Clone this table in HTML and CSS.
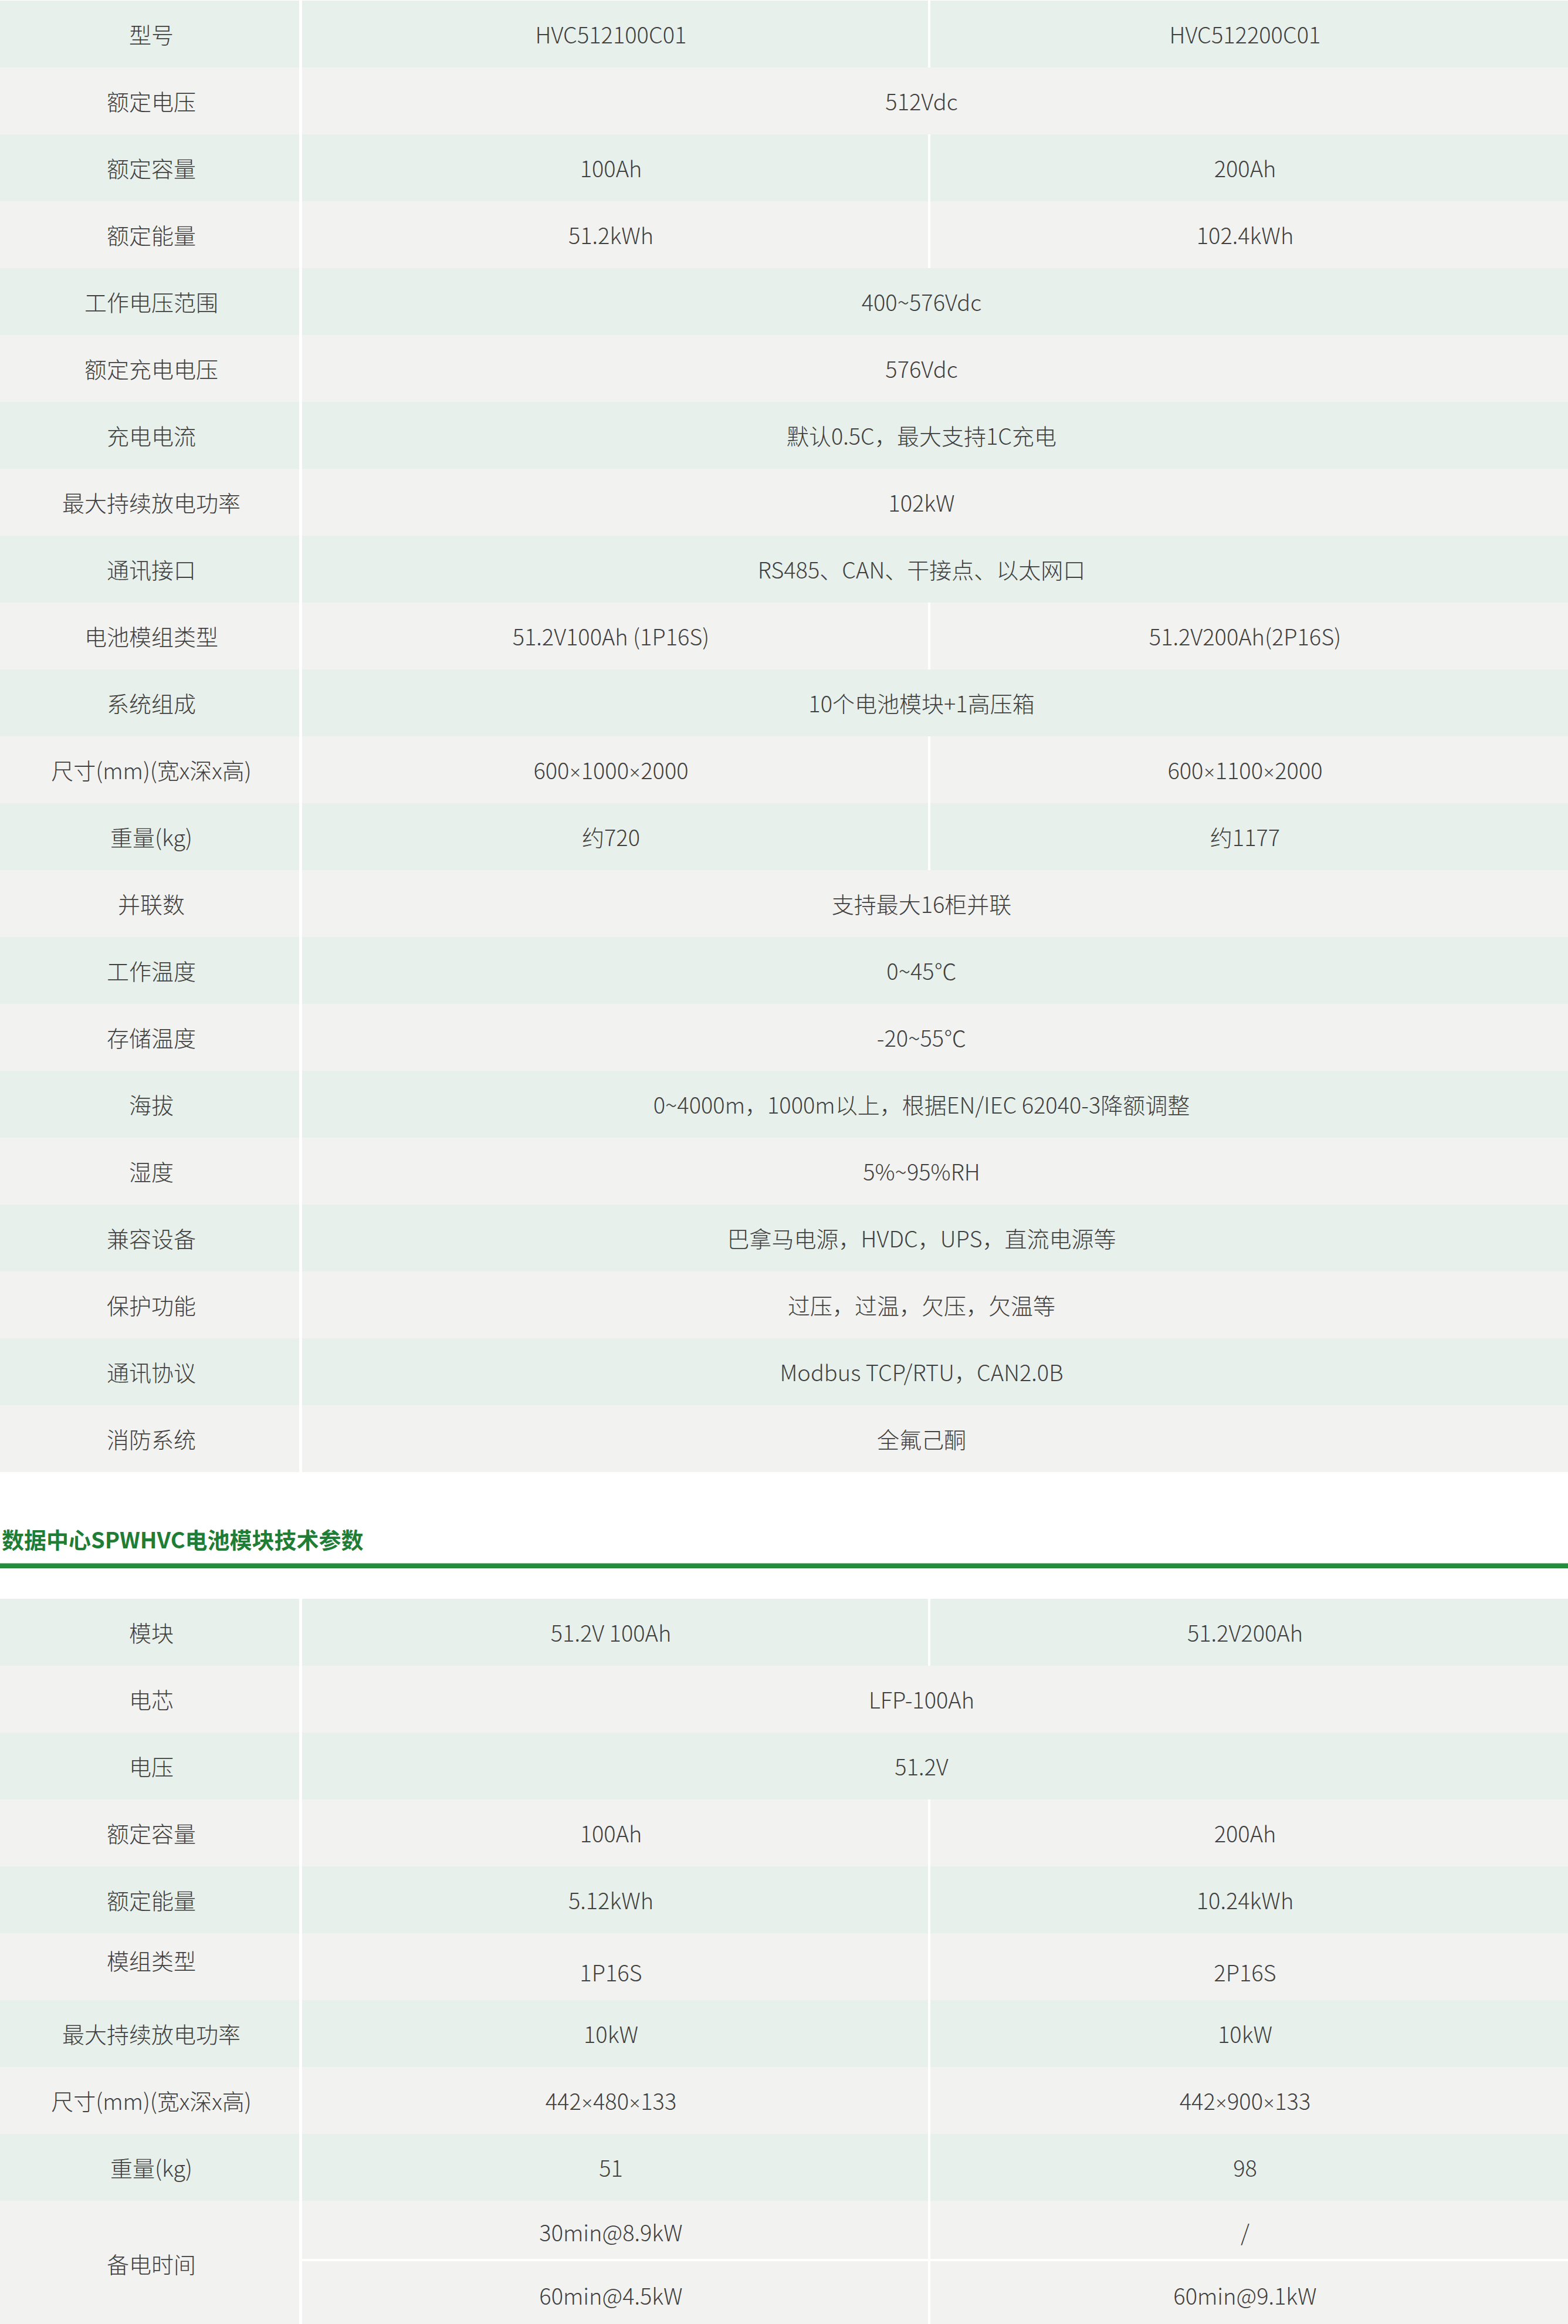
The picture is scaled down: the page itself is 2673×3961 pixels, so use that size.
FILE: index.html
```html
<!DOCTYPE html>
<html lang="zh-CN">
<head>
<meta charset="utf-8">
<title>数据中心SPWHVC技术参数</title>
<link rel="stylesheet" href="styles.css">
</head>
<body>
<main class="page">
  <table class="spec">
    <colgroup><col class="c-label"><col class="c-a"><col class="c-b"></colgroup>
    <tbody>
      <tr class="g"><td class="lb">型号</td><td class="v">HVC512100C01</td><td class="v">HVC512200C01</td></tr>
      <tr class="w"><td class="lb">额定电压</td><td class="v sp" colspan="2">512Vdc</td></tr>
      <tr class="g"><td class="lb">额定容量</td><td class="v">100Ah</td><td class="v">200Ah</td></tr>
      <tr class="w"><td class="lb">额定能量</td><td class="v">51.2kWh</td><td class="v">102.4kWh</td></tr>
      <tr class="g"><td class="lb">工作电压范围</td><td class="v sp" colspan="2">400~576Vdc</td></tr>
      <tr class="w"><td class="lb">额定充电电压</td><td class="v sp" colspan="2">576Vdc</td></tr>
      <tr class="g"><td class="lb">充电电流</td><td class="v sp" colspan="2">默认0.5C，最大支持1C充电</td></tr>
      <tr class="w"><td class="lb">最大持续放电功率</td><td class="v sp" colspan="2">102kW</td></tr>
      <tr class="g"><td class="lb">通讯接口</td><td class="v sp" colspan="2">RS485、CAN、干接点、以太网口</td></tr>
      <tr class="w"><td class="lb">电池模组类型</td><td class="v">51.2V100Ah (1P16S)</td><td class="v">51.2V200Ah(2P16S)</td></tr>
      <tr class="g"><td class="lb">系统组成</td><td class="v sp" colspan="2">10个电池模块+1高压箱</td></tr>
      <tr class="w"><td class="lb">尺寸(mm)(宽x深x高)</td><td class="v">600<span class="x">×</span>1000<span class="x">×</span>2000</td><td class="v">600<span class="x">×</span>1100<span class="x">×</span>2000</td></tr>
      <tr class="g"><td class="lb">重量(kg)</td><td class="v">约720</td><td class="v">约1177</td></tr>
      <tr class="w"><td class="lb">并联数</td><td class="v sp" colspan="2">支持最大16柜并联</td></tr>
      <tr class="g"><td class="lb">工作温度</td><td class="v sp" colspan="2">0~45℃</td></tr>
      <tr class="w"><td class="lb">存储温度</td><td class="v sp" colspan="2">-20~55℃</td></tr>
      <tr class="g"><td class="lb">海拔</td><td class="v sp" colspan="2">0~4000m，1000m以上，根据EN/IEC 62040-3降额调整</td></tr>
      <tr class="w"><td class="lb">湿度</td><td class="v sp" colspan="2">5%~95%RH</td></tr>
      <tr class="g"><td class="lb">兼容设备</td><td class="v sp" colspan="2">巴拿马电源，HVDC，UPS，直流电源等</td></tr>
      <tr class="w"><td class="lb">保护功能</td><td class="v sp" colspan="2">过压，过温，欠压，欠温等</td></tr>
      <tr class="g"><td class="lb">通讯协议</td><td class="v sp" colspan="2">Modbus TCP/RTU，CAN2.0B</td></tr>
      <tr class="w"><td class="lb">消防系统</td><td class="v sp" colspan="2">全氟己酮</td></tr>
    </tbody>
  </table>

  <h2 class="section-title">数据中心SPWHVC电池模块技术参数</h2>

  <table class="spec spec-2">
    <colgroup><col class="c-label"><col class="c-a"><col class="c-b"></colgroup>
    <tbody>
      <tr class="g"><td class="lb">模块</td><td class="v">51.2V 100Ah</td><td class="v">51.2V200Ah</td></tr>
      <tr class="w"><td class="lb">电芯</td><td class="v sp" colspan="2">LFP-100Ah</td></tr>
      <tr class="g"><td class="lb">电压</td><td class="v sp" colspan="2">51.2V</td></tr>
      <tr class="w"><td class="lb">额定容量</td><td class="v">100Ah</td><td class="v">200Ah</td></tr>
      <tr class="g"><td class="lb">额定能量</td><td class="v">5.12kWh</td><td class="v">10.24kWh</td></tr>
      <tr class="w"><td class="lb lb-up">模组类型</td><td class="v v-down">1P16S</td><td class="v v-down">2P16S</td></tr>
      <tr class="g"><td class="lb">最大持续放电功率</td><td class="v">10kW</td><td class="v">10kW</td></tr>
      <tr class="w"><td class="lb">尺寸(mm)(宽x深x高)</td><td class="v">442<span class="x">×</span>480<span class="x">×</span>133</td><td class="v">442<span class="x">×</span>900<span class="x">×</span>133</td></tr>
      <tr class="g"><td class="lb">重量(kg)</td><td class="v">51</td><td class="v">98</td></tr>
      <tr class="w sub-1"><td class="lb" rowspan="2">备电时间</td><td class="v">30min@8.9kW</td><td class="v">/</td></tr>
      <tr class="w sub-2"><td class="v">60min@4.5kW</td><td class="v">60min@9.1kW</td></tr>
    </tbody>
  </table>
</main>
</body>
</html>
```

FILE: styles.css
```css
html, body {
  margin: 0;
  padding: 0;
  background: #ffffff;
}

.page {
  width: 2673px;
  padding-top: 1px;
  font-family: "Noto Sans CJK SC", "Noto Sans", sans-serif;
  font-weight: 300;
  color: #404040;
}

.spec {
  width: 2673px;
  table-layout: fixed;
  border-collapse: separate;
  border-spacing: 0;
  font-size: 38px;
  line-height: 1.2;
}

.c-label { width: 510px; }
.c-a { width: 1072px; }
.c-b { width: 1091px; }

.spec td {
  height: 114px;
  padding: 0;
  text-align: center;
  vertical-align: middle;
  white-space: nowrap;
  box-sizing: border-box;
}

.spec tr.g td { background: #e7f0eb; }
.spec tr.w td { background: #f2f2f0; }

.spec td.v {
  border-left: 5px solid #ffffff;
  padding-right: 14px;
}

.spec td.v + td.v {
  border-left-width: 4px;
}

.spec td.v.sp {
  padding-right: 46px;
}

.spec td.lb {
  padding-left: 6px;
}

.x {
  font-family: "Noto Sans", "Liberation Sans", sans-serif;
  font-size: 32px;
  margin: 0 1px;
}

.spec td.lb-up { padding-bottom: 22px; }
.spec td.v-down { padding-top: 18px; }

.spec-2 tr.sub-1 td.v {
  height: 99px;
  padding-top: 6px;
}
.spec-2 tr.sub-2 td.v {
  height: 114px;
  border-top: 4px solid #ffffff;
  padding-top: 6px;
}

.section-title {
  margin: 0;
  padding: 92px 0 20px 3px;
  font-size: 38px;
  line-height: 44px;
  font-weight: 700;
  color: #1f7d36;
  border-bottom: 8px solid #258c3c;
  position: relative;
}

.section-title::after {
  content: "";
  position: absolute;
  left: 0;
  right: 0;
  bottom: 0;
  height: 1px;
  background: #8fc79d;
}

.spec-2 {
  margin-top: 52px;
}
```
